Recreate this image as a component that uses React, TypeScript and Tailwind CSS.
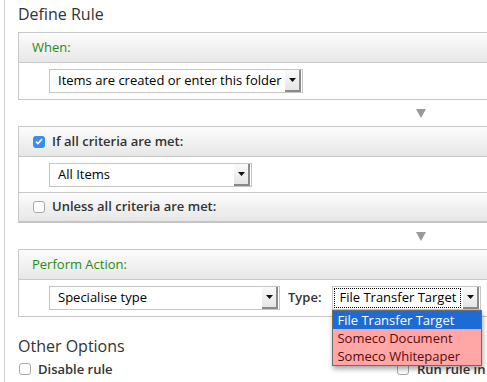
import React from "react"

function DropButton() {
  return (
    <div className="flex h-[22px] w-[16px] items-center justify-center border-r-2 border-b-2 border-[#8a8a8a] bg-gradient-to-b from-[#fafafa] to-[#e6e6e6]">
      <svg width="7" height="4" viewBox="0 0 7 4">
        <path d="M0 0h7L3.5 4z" fill="#111" />
      </svg>
    </div>
  )
}

function Select({ text, width, focus }: { text: string; width: string; focus?: boolean }) {
  return (
    <div className={`flex h-[24px] items-center border border-[#c4c4c4] bg-white pr-px ${width}`}>
      {focus ? (
        <div className="ml-px flex h-[20px] flex-1 items-center border border-dotted border-black pl-[4px] text-[13px] whitespace-nowrap text-black">
          {text}
        </div>
      ) : (
        <div className="flex-1 pl-[8px] text-[13px] whitespace-nowrap text-black">{text}</div>
      )}
      <div className="ml-[2px]">
        <DropButton />
      </div>
    </div>
  )
}

function Check({ checked }: { checked?: boolean }) {
  if (checked)
    return (
      <span className="flex h-[12px] w-[12px] shrink-0 items-center justify-center rounded-[3px] bg-[#3a8cf0]">
        <svg width="8" height="7" viewBox="0 0 8 7">
          <path d="M1 3.6l2 2L7 1" fill="none" stroke="#fff" strokeWidth="1.6" />
        </svg>
      </span>
    )
  return <span className="h-[12px] w-[12px] shrink-0 rounded-[3px] border border-[#a8a8a8] bg-white" />
}

function Header({ children, last }: { children: React.ReactNode; last?: boolean }) {
  return (
    <div
      className={`flex h-[30px] items-center bg-gradient-to-b from-[#fcfcfc] to-[#e7e7e7] ${
        last ? "border-b-2 border-[#c4c4c4]" : "border-b border-[#c8c8c8]"
      }`}
    >
      {children}
    </div>
  )
}

function Arrow() {
  return (
    <div className="flex h-[26px] w-[806px] items-center justify-center">
      <svg width="10" height="9" viewBox="0 0 10 9">
        <path d="M0 0h10L5 9z" fill="#9a9a9a" />
      </svg>
    </div>
  )
}

export default function App() {
  return (
    <div className="relative h-[382px] w-[487px] overflow-hidden bg-white font-['Open_Sans',sans-serif] text-[#333]">
      <div className="ml-[4px] h-full border-l border-[#cfcfcf] pl-[13px] pt-[4px]">
        <h1 className="h-[20px] text-[16px] leading-[20px] text-[#333]">Define Rule</h1>

        <div className="mt-[8px] w-[806px] border border-[#c8c8c8]">
          <Header>
            <span className="pl-[13px] text-[13px] text-[#2c8a12]">When:</span>
          </Header>
          <div className="flex h-[36px] items-center pl-[30px]">
            <Select text="Items are created or enter this folder" width="w-[254px]" />
          </div>
        </div>

        <Arrow />

        <div className="w-[806px] border-x border-t border-[#c8c8c8]">
          <Header>
            <div className="flex items-center gap-[7px] pl-[14px]">
              <Check checked />
              <span className="text-[13px] font-semibold text-[#333]">If all criteria are met:</span>
            </div>
          </Header>
          <div className="flex h-[36px] items-center border-b border-[#c8c8c8] pl-[30px]">
            <Select text="All Items" width="w-[203px]" />
          </div>
          <Header last>
            <div className="flex items-center gap-[7px] pl-[14px]">
              <Check />
              <span className="text-[13px] font-semibold text-[#333]">Unless all criteria are met:</span>
            </div>
          </Header>
        </div>

        <Arrow />

        <div className="w-[806px] border border-[#c8c8c8]">
          <Header>
            <span className="pl-[13px] text-[13px] text-[#2c8a12]">Perform Action:</span>
          </Header>
          <div className="flex h-[36px] items-center pl-[30px]">
            <Select text="Specialise type" width="w-[231px]" />
            <span className="ml-[8px] text-[13px] font-semibold text-[#333]">Type:</span>
            <div className="relative ml-[11px]">
              <Select text="File Transfer Target" width="w-[149px]" focus />
              <div className="absolute top-[24px] left-0 z-10 w-[150px] border border-[#6d6d6d] shadow-[1px_3px_5px_rgba(0,0,0,0.35)]">
                <div className="h-[18px] bg-[#1d6bd6] pl-[4px] text-[13px] leading-[18px] whitespace-nowrap text-white">File Transfer Target</div>
                <div className="h-[18px] bg-[#ffa6a6] pl-[4px] text-[13px] leading-[18px] whitespace-nowrap text-[#5a0a0a]">Someco Document</div>
                <div className="h-[18px] bg-[#ffa6a6] pl-[4px] text-[13px] leading-[18px] whitespace-nowrap text-[#5a0a0a]">Someco Whitepaper</div>
              </div>
            </div>
          </div>
        </div>

        <h2 className="mt-[19px] h-[20px] text-[16px] leading-[20px] text-[#333]">Other Options</h2>
        <div className="mt-[3px] flex h-[20px] items-center leading-[20px]">
          <div className="flex w-[379px] shrink-0 items-center gap-[7px] pl-px">
            <Check />
            <span className="text-[13px] font-semibold whitespace-nowrap text-[#333]">Disable rule</span>
          </div>
          <div className="flex shrink-0 items-center gap-[8px]">
            <Check />
            <span className="text-[13px] font-semibold whitespace-nowrap text-[#333]">Run rule in background</span>
          </div>
        </div>
      </div>
    </div>
  )
}
